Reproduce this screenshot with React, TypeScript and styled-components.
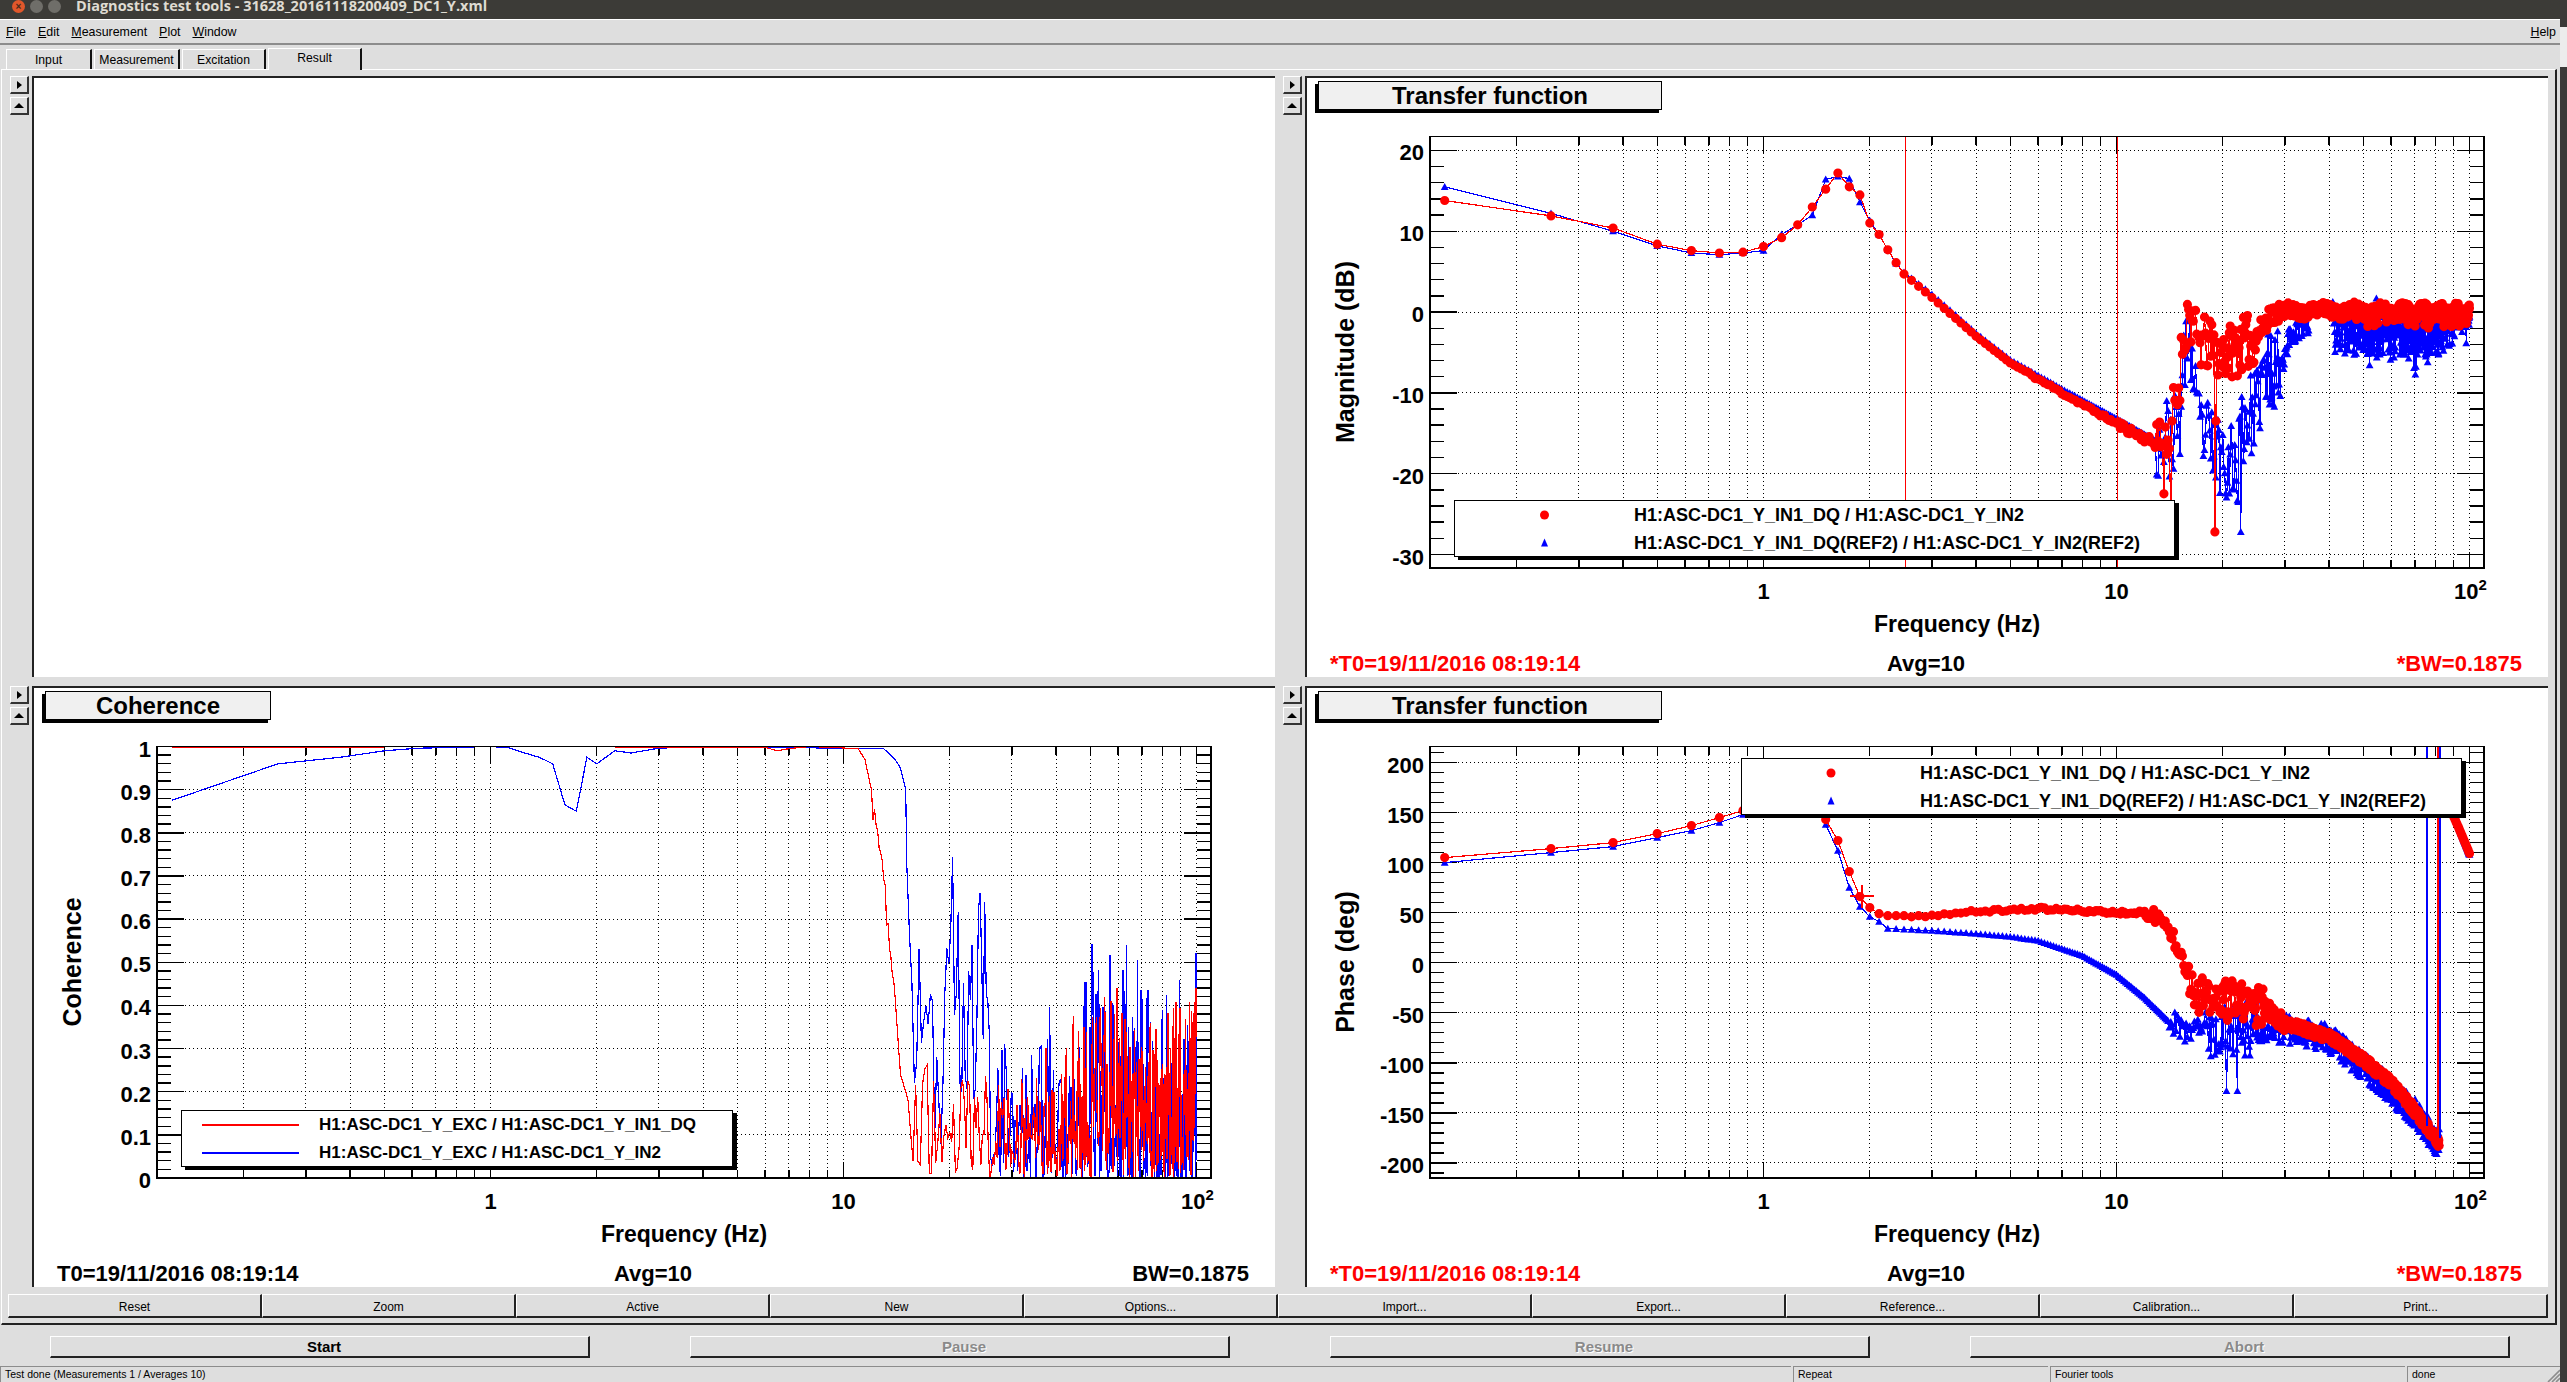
import React, { useMemo } from "react";
import styled, { createGlobalStyle } from "styled-components";

const GlobalStyle = createGlobalStyle`
  html, body { margin: 0; padding: 0; background: #3a3a38; }
  body { width: 2567px; height: 1382px; overflow: hidden; font-family: "Liberation Sans", Arial, sans-serif; }
`;

/* ---------- data ---------- */

type Table = [number, number][];
type Point = [number, number];

const rng = (seed: number) => () => {
  seed = (seed + 0x6d2b79f5) | 0;
  let t = Math.imul(seed ^ (seed >>> 15), 1 | seed);
  t = (t + Math.imul(t ^ (t >>> 7), 61 | t)) ^ t;
  return ((t ^ (t >>> 14)) >>> 0) / 4294967296;
};

const interp = (table: Table, f: number) => {
  if (f <= table[0][0]) return table[0][1];
  for (let i = 1; i < table.length; i++) {
    if (f <= table[i][0]) {
      const [f0, v0] = table[i - 1];
      const [f1, v1] = table[i];
      const t = (Math.log10(f) - Math.log10(f0)) / (Math.log10(f1) - Math.log10(f0));
      return v0 + (v1 - v0) * t;
    }
  }
  return table[table.length - 1][1];
};

const magRedLow: Table = [
  [0.125, 13.8], [0.25, 11.9], [0.375, 10.4], [0.5, 8.4], [0.625, 7.6], [0.75, 7.3], [0.875, 7.4], [1, 8.1],
  [1.125, 9.2], [1.25, 10.8], [1.375, 13], [1.5, 15.2], [1.625, 17.2], [1.75, 15.5], [1.875, 14.5], [2, 11],
  [2.125, 9.6], [2.25, 7.7], [2.375, 6.1], [2.5, 4.7], [3, 1.8], [4, -3], [5, -6.3], [7, -10], [10, -13.8], [13, -16.4],
];
const magBlueLow: Table = [
  [0.125, 15.5], [0.25, 12.2], [0.375, 10], [0.5, 8.2], [0.625, 7.3], [0.75, 7.1], [0.875, 7.3], [1, 7.6],
  [1.125, 9.6], [1.25, 10.8], [1.375, 12], [1.5, 16.4], [1.625, 16.8], [1.75, 16.5], [1.875, 13.6], [2, 11.3],
  [2.125, 9.6], [2.25, 7.7], [2.375, 6], [2.5, 4.9], [3, 2.2], [4, -2.6], [5, -5.9], [7, -9.5], [10, -13.2], [13, -16],
];
const magRedHigh: Table = [
  [13, -15.5], [14, -15], [15, -9.5], [15.4, -3.5], [16, 0], [16.9, -3.5], [18.7, -4.5], [19.6, -5], [22, -4.5],
  [25, -3], [27, -0.5], [30, 0.2], [100, 0],
];
const magBlueHigh: Table = [
  [13, -16], [15, -15], [15.4, -9], [16, -1.5], [16.4, -7], [17, -14], [19, -17], [22, -19], [22.5, -14],
  [25, -12], [26, -8], [29.5, -6], [31, -3], [35, -1], [38, 0.3], [41, 0], [43, -2], [100, -2],
];

const phaseRedTable: Table = [
  [0.125, 105], [0.25, 114], [0.375, 120], [0.5, 129], [0.625, 137], [0.75, 145], [0.875, 152], [1, 160],
  [1.25, 165], [1.375, 160], [1.5, 143], [1.625, 122], [1.75, 91], [1.875, 66], [2, 55], [2.125, 49], [2.25, 47],
  [3, 47], [4, 51], [6, 54], [10, 50], [12.5, 50], [13.5, 42], [14.5, 25], [15.5, 5], [16.5, -25], [18, -38],
  [22, -38], [26, -45], [30, -60], [40, -74], [50, -97], [60, -120], [70, -148], [80, -175], [82, -180],
];
const phaseBlueTable: Table = [
  [0.125, 100], [0.25, 110], [0.375, 116], [0.5, 125], [0.625, 132], [0.75, 140], [0.875, 148], [1, 155],
  [1.25, 165], [1.375, 162], [1.5, 138], [1.625, 112], [1.75, 75], [1.875, 56], [2, 46], [2.125, 41], [2.25, 34],
  [3, 32], [4, 29], [5, 26], [6, 22], [8, 7], [10, -12], [12, -35], [14, -58], [15, -65], [18, -68], [25, -65],
  [30, -64], [40, -76], [50, -103], [60, -128], [70, -150], [80, -178], [83, -180],
];

const cohBlueEnv: Table = [
  [15, 0.9], [16, 0.66], [17, 0.38], [18, 0.62], [20, 0.85], [22, 0.55], [25, 0.78], [28, 0.38], [30, 0.34], [40, 0.42],
  [50, 0.56], [60, 0.6], [70, 0.56], [80, 0.46], [100, 0.56],
];
const cohRedEnv: Table = [[15, 0.27], [30, 0.26], [40, 0.34], [50, 0.42], [60, 0.46], [75, 0.38], [100, 0.44]];
const cohBlueTop: Table = [
  [0.125, 0.875], [0.25, 0.96], [0.375, 0.975], [0.5, 0.99], [0.625, 0.996], [1, 1], [1.125, 0.997], [1.25, 0.985],
  [1.375, 0.975], [1.5, 0.96], [1.625, 0.865], [1.75, 0.85], [1.875, 0.975], [2, 0.96], [2.25, 0.99], [2.5, 0.985],
  [3, 0.996], [4, 1], [13, 0.995], [14, 0.97], [14.5, 0.95], [15, 0.9],
];
const cohRedTop: Table = [
  [0.125, 0.997], [1, 1], [6, 0.998], [6.5, 0.99], [7, 0.995], [8, 1], [11, 0.995], [11.5, 0.97], [12, 0.9],
  [12.5, 0.85], [13, 0.72], [13.5, 0.6], [14, 0.42], [14.5, 0.24], [15, 0.2],
];

const FREQS = Array.from({ length: 800 }, (_, i) => (i + 1) * 0.125);

const magRed = (): Point[] => {
  const r = rng(11);
  return FREQS.map((f): Point => {
    if (f < 13) return [f, interp(magRedLow, f) + (f > 5 ? (r() - 0.5) * (f > 10 ? 1 : 0.4) : 0)];
    if (Math.abs(f - 19) < 0.07) return [f, -27.2];
    if (Math.abs(f - 19.125) < 0.07) return [f, -13.5];
    if (Math.abs(f - 14.25) < 0.07) return [f, -25];
    const amp = f < 25 ? 3.4 : f < 30 ? 1.3 : 0.8;
    const dip = f >= 13.5 && f < 14.5 && r() > 0.65 ? -5 : 0;
    const wobble = f > 30 ? Math.sin(f * 0.7) * 0.35 : 0;
    const low = f > 40 && r() > 0.92 ? -1.2 : 0;
    return [f, interp(magRedHigh, f) + (r() - 0.5) * 2 * amp + dip + wobble + low];
  });
};

const magBlue = (): Point[] => {
  const r = rng(23);
  return FREQS.map((f): Point => {
    if (f < 13) return [f, interp(magBlueLow, f)];
    if (Math.abs(f - 22.5) < 0.07) return [f, -27.2];
    if (Math.abs(f - 22.125) < 0.07) return [f, -23.5];
    if (f > 35 && f < 41) return [f, 0.3 + (r() - 0.5) * 0.3];
    if (Math.abs(f - 54.5) < 0.07) return [f, 1.7];
    if (f > 41) {
      const spike = r() > 0.9 ? -3 * r() : 0;
      const env = f > 85 ? 1.6 : 5;
      return [f, -0.3 - Math.pow(r(), 1.3) * env + spike];
    }
    const amp = f < 29.5 ? 5 : 1.6;
    return [f, interp(magBlueHigh, f) + (r() - 0.5) * 2 * amp];
  });
};

const phaseRed = (): Point[] => {
  const r = rng(37);
  return FREQS.map((f): Point => {
    if (f > 82) return [f, 180 - ((f - 82) / 18) * 68 - (f < 84 ? 0 : 3)];
    const base = interp(phaseRedTable, f);
    let amp = 0;
    if (f > 2.5) amp = 1.5;
    if (f > 12) amp = 8;
    if (f > 15.5) amp = 20;
    if (f > 26) amp = 9;
    if (f > 30) amp = 5;
    return [f, base + (r() - 0.5) * 2 * amp];
  });
};

const phaseBlue = (): Point[] => {
  const r = rng(51);
  return FREQS.map((f): Point => {
    if (f > 82.4) return [f, 180 - ((f - 82.4) / 17.6) * 72];
    if (f > 82) return [f, -180];
    const base = interp(phaseBlueTable, f);
    let amp = 0;
    if (f > 14) amp = 13;
    if (f > 17) amp = 28;
    if (f > 25) amp = 16;
    if (f > 32) amp = 14;
    if (Math.abs(f - 20.5) < 0.07 || Math.abs(f - 22) < 0.07) return [f, -128];
    return [f, base + (r() - 0.5) * 2 * amp];
  });
};

const cohBlue = (): Point[] => {
  const r = rng(71);
  return FREQS.map((f): Point => {
    if (f <= 15) return [f, interp(cohBlueTop, f)];
    if (f >= 99.75) return [f, 0.52];
    if (Math.abs(f - 68) < 0.07) return [f, 0.64];
    if (Math.abs(f - 20) < 0.07) return [f, 0.85];
    if (Math.abs(f - 25) < 0.07) return [f, 0.75];
    const env = interp(cohBlueEnv, f);
    const k = f < 26 ? 0.7 : 2.4;
    return [f, Math.pow(r(), k) * env];
  }).filter(([f], i) => f <= 15 || i % 2 === 0 || f >= 99.75);
};

const cohRed = (): Point[] => {
  const r = rng(83);
  return FREQS.map((f): Point => {
    if (f <= 15) return [f, interp(cohRedTop, f) - (f > 12 && f < 14 ? r() * 0.08 : 0)];
    if (f >= 99.75) return [f, 0.44];
    const env = interp(cohRedEnv, f);
    return [f, Math.pow(r(), f < 30 ? 1.2 : 1.7) * env];
  }).filter(([f], i) => f <= 15 || i % 2 === 1 || f >= 99.75);
};

/* ---------- plot ---------- */

const LEFT = 125;
const RIGHT = 1179;
const TOP = 60.5;
const BOTTOM = 492;
const X1 = 458.5;
const DECADE = 353;

const xOf = (f: number) => X1 + Math.log10(f) * DECADE;

type Axis = {
  y0: number; // pixel of value v0
  v0: number;
  perUnit: number;
  major: number[];
  minorStep: number;
};

const dots = (pts: [number, number][], r: number) =>
  pts.map(([x, y]) => `M${(x - r).toFixed(1)} ${y.toFixed(1)}a${r} ${r} 0 1 0 ${2 * r} 0a${r} ${r} 0 1 0 ${-2 * r} 0`).join("");

const triangles = (pts: [number, number][], s: number) =>
  pts.map(([x, y]) => `M${x.toFixed(1)} ${(y - s).toFixed(1)}l${s} ${(s * 1.8).toFixed(1)}h${-2 * s}z`).join("");

const AxisLabel = styled.text`
  font: bold 22px "Liberation Sans", Arial, sans-serif;
  fill: #000;
`;

const AxisTitle = styled.text`
  font: bold 23px "Liberation Sans", Arial, sans-serif;
  fill: #000;
`;

const YTitle = styled(AxisTitle)`
  font-size: 25px;
`;

const Expo = styled.tspan`
  font-size: 15px;
`;

const PlotSvg = styled.svg`
  display: block;
  width: 1243px;
  height: 540px;
  flex: none;
`;

type Series = { points: Point[]; color: string; marker?: "dot" | "tri" };

const Plot = ({ axis, ytitle, series, extra }: { axis: Axis; ytitle: string; series: Series[]; extra?: React.ReactNode }) => {
  const yOf = (v: number) => axis.y0 + (axis.v0 - v) * axis.perUnit;
  const subs: { x: number; major: boolean }[] = [];
  for (let d = -1; d <= 2; d++) {
    for (let k = 1; k <= 9; k++) {
      const x = xOf(k * Math.pow(10, d));
      if (x > LEFT + 1 && x < RIGHT - 1) subs.push({ x, major: k === 1 });
    }
  }
  const minors: number[] = [];
  const vTop = axis.v0 + (axis.y0 - TOP) / axis.perUnit;
  const vBot = axis.v0 - (BOTTOM - axis.y0) / axis.perUnit;
  const start = Math.ceil(vBot / axis.minorStep - 1e-6);
  for (let i = start; i * axis.minorStep <= vTop + 1e-6; i++) minors.push(i * axis.minorStep);
  const clipId = `frame-${ytitle.replace(/\W/g, "")}`;

  return (
    <PlotSvg viewBox="0 34 1243 540">
      <defs>
        <clipPath id={clipId}>
          <rect x={LEFT} y={TOP} width={RIGHT - LEFT} height={BOTTOM - TOP} />
        </clipPath>
      </defs>
      <g stroke="#000" strokeWidth="1" strokeDasharray="1.4 2.6" shapeRendering="crispEdges">
        {subs.map((s) => (
          <line key={s.x} x1={s.x} x2={s.x} y1={TOP} y2={BOTTOM} />
        ))}
        {axis.major.map((v) => (
          <line key={v} x1={LEFT} x2={RIGHT} y1={yOf(v)} y2={yOf(v)} />
        ))}
      </g>
      <g stroke="#000" strokeWidth="1.4" shapeRendering="crispEdges">
        {minors.map((v) => {
          const isMajor = axis.major.some((m) => Math.abs(m - v) < 1e-6);
          const len = isMajor ? 27 : 14;
          return (
            <g key={v}>
              <line x1={LEFT} x2={LEFT + len} y1={yOf(v)} y2={yOf(v)} />
              <line x1={RIGHT - len} x2={RIGHT} y1={yOf(v)} y2={yOf(v)} />
            </g>
          );
        })}
        {subs.map((s) => {
          const len = s.major ? 16 : 8;
          return (
            <g key={s.x}>
              <line x1={s.x} x2={s.x} y1={BOTTOM - len} y2={BOTTOM} />
              <line x1={s.x} x2={s.x} y1={TOP} y2={TOP + len} />
            </g>
          );
        })}
      </g>
      <g clipPath={`url(#${clipId})`}>
        {series.map((s, i) => {
          const pts = s.points.map(([f, v]): [number, number] => [xOf(f), yOf(v)]);
          return (
            <g key={i}>
              <polyline
                points={pts.map(([x, y]) => `${x.toFixed(1)},${y.toFixed(1)}`).join(" ")}
                fill="none"
                stroke={s.color}
                strokeWidth="1.2"
                shapeRendering="crispEdges"
              />
              {s.marker === "dot" && <path d={dots(pts, 4.6)} fill={s.color} />}
              {s.marker === "tri" && <path d={triangles(pts, 3.9)} fill={s.color} />}
            </g>
          );
        })}
        {extra}
      </g>
      <rect x={LEFT} y={TOP} width={RIGHT - LEFT} height={BOTTOM - TOP} fill="none" stroke="#000" strokeWidth="1.6" shapeRendering="crispEdges" />
      {axis.major.map((v) => (
        <AxisLabel key={v} x={LEFT - 6} y={yOf(v) + 10} textAnchor="end">
          {v}
        </AxisLabel>
      ))}
      <AxisLabel x={xOf(1)} y={523} textAnchor="middle">1</AxisLabel>
      <AxisLabel x={xOf(10)} y={523} textAnchor="middle">10</AxisLabel>
      <AxisLabel x={xOf(100) + 1} y={523} textAnchor="middle">
        10<Expo dy={-9}>2</Expo>
      </AxisLabel>
      <AxisTitle x={652} y={556} textAnchor="middle">Frequency (Hz)</AxisTitle>
      <YTitle transform="translate(49 276) rotate(-90)" textAnchor="middle">{ytitle}</YTitle>
    </PlotSvg>
  );
};

/* ---------- window chrome ---------- */

const Desktop = styled.div`
  display: flex;
  width: 2567px;
  height: 1382px;
  background: #3a3a38;
  overflow: hidden;
`;

const Edge = styled.div`
  flex: 1;
  padding-top: 27px;
`;

const EdgeBlock = styled.div`
  height: 40px;
  background: #ececec;
`;

const Win = styled.div`
  display: flex;
  flex-direction: column;
  width: 2560px;
  height: 1382px;
  background: #dedede;
`;

const TitleBar = styled.div`
  display: flex;
  align-items: flex-start;
  flex: none;
  height: 19px;
  padding-left: 12px;
  background: #3c3b37;
`;

const WinButton = styled.span<{ $close?: boolean }>`
  display: flex;
  align-items: center;
  justify-content: center;
  width: 13px;
  height: 13px;
  margin-right: 5px;
  border-radius: 50%;
  background: ${(p) => (p.$close ? "#e0572b" : "#6f6e69")};
  color: #4a2a1a;
  font: bold 10px "Liberation Sans", Arial, sans-serif;
  line-height: 13px;
`;

const TitleText = styled.span`
  margin: 0 0 0 10px;
  color: #dfdbd2;
  font: bold 14.5px "Open Sans", "Liberation Sans", sans-serif;
  line-height: 11px;
  white-space: nowrap;
`;

const MenuBar = styled.div`
  display: flex;
  align-items: center;
  flex: none;
  height: 23px;
  padding: 0 4px 0 6px;
  border-top: 1px solid #fff;
  border-bottom: 2px solid #8c8c8c;
  font-size: 12.4px;
  color: #000;
`;

const MenuItem = styled.span<{ $right?: boolean }>`
  margin-right: 12px;
  ${(p) => p.$right && "margin-left: auto; margin-right: 0;"}
  u { text-underline-offset: 1px; }
`;

const TabRow = styled.div`
  display: flex;
  align-items: flex-end;
  flex: none;
  height: 24px;
  padding-left: 6px;
  font-size: 12.2px;
`;

const Tab = styled.div<{ $active?: boolean; $w: number }>`
  display: flex;
  align-items: center;
  justify-content: center;
  box-sizing: border-box;
  width: ${(p) => p.$w}px;
  height: ${(p) => (p.$active ? 22 : 20)}px;
  margin-right: ${(p) => (p.$active ? 0 : 2)}px;
  margin-bottom: ${(p) => (p.$active ? -1 : 0)}px;
  padding-bottom: ${(p) => (p.$active ? 3 : 0)}px;
  border-top: 1px solid #fff;
  border-left: 1px solid #fff;
  border-right: 2px solid #111;
  background: #dedede;
  position: relative;
  z-index: ${(p) => (p.$active ? 1 : 0)};
`;

const TabFrame = styled.div`
  display: flex;
  flex-direction: column;
  flex: none;
  box-sizing: border-box;
  height: 1256px;
  margin: 0 3px 0 1px;
  padding: 6px 7px 0 0;
  border-top: 1px solid #fff;
  border-left: 1px solid #fff;
  border-right: 2px solid #222;
  border-bottom: 2px solid #222;
`;

const PaneGrid = styled.div`
  display: grid;
  grid-template-columns: 1273px 1273px;
  grid-template-rows: 601px 601px;
  row-gap: 9px;
`;

const Pane = styled.div`
  display: flex;
`;

const Strip = styled.div`
  display: flex;
  flex-direction: column;
  flex: none;
  align-items: flex-end;
  gap: 3px;
  width: 30px;
  padding-right: 3px;
  box-sizing: border-box;
`;

const StripButton = styled.div`
  display: flex;
  align-items: center;
  justify-content: center;
  box-sizing: border-box;
  width: 19px;
  height: 18px;
  border-top: 1px solid #fff;
  border-left: 1px solid #fff;
  border-right: 2px solid #333;
  border-bottom: 2px solid #333;
  background: #dedede;
`;

const ArrowRight = styled.i`
  width: 0;
  height: 0;
  border-top: 4px solid transparent;
  border-bottom: 4px solid transparent;
  border-left: 5px solid #000;
`;

const ArrowUp = styled.i`
  width: 0;
  height: 0;
  border-left: 5px solid transparent;
  border-right: 5px solid transparent;
  border-bottom: 5px solid #000;
`;

const Canvas = styled.div`
  position: relative;
  display: flex;
  flex-direction: column;
  box-sizing: border-box;
  width: 1243px;
  height: 601px;
  background: #fff;
  box-shadow: inset 2px 2px 0 #222;
`;

const TitleBox = styled.div<{ $w: number }>`
  display: flex;
  align-items: center;
  justify-content: center;
  flex: none;
  box-sizing: border-box;
  width: ${(p) => p.$w}px;
  height: 29px;
  margin: 5px 0 0 13px;
  border: 1.5px solid #000;
  background: #f0f0f0;
  box-shadow: -3px 3px 0 #000;
  color: #000;
  font: bold 24px "Liberation Sans", Arial, sans-serif;
`;

const Footer = styled.div<{ $red?: boolean }>`
  display: grid;
  grid-template-columns: 1fr auto 1fr;
  flex: none;
  height: 26px;
  padding: 1px 26px 0 25px;
  font: bold 22px "Liberation Sans", Arial, sans-serif;
  line-height: 26px;
  color: ${(p) => (p.$red ? "#f00" : "#000")};
`;

const FooterAvg = styled.span`
  color: #000;
`;

const FooterEnd = styled.span`
  text-align: right;
`;

const Legend = styled.div<{ $x: number; $y: number; $w: number; $key: number; $text: number; $size: number }>`
  position: absolute;
  left: ${(p) => p.$x}px;
  top: ${(p) => p.$y}px;
  display: grid;
  grid-template-columns: ${(p) => p.$key}px ${(p) => p.$text}px;
  grid-auto-rows: 28px;
  align-items: center;
  box-sizing: border-box;
  width: ${(p) => p.$w}px;
  height: 57px;
  background: #fff;
  border: 1.5px solid #000;
  box-shadow: 4px 3px 0 #000;
  font: bold ${(p) => p.$size}px "Liberation Sans", Arial, sans-serif;
  color: #000;
  white-space: nowrap;
`;

const LegendKey = styled.svg`
  display: block;
  width: 100%;
  height: 12px;
`;

const LegendLabel = styled.span`
  display: block;
`;

const ToolRow = styled.div`
  display: grid;
  grid-template-columns: repeat(10, 1fr);
  height: 24px;
  margin: 7px 0 0 6px;
`;

const ToolButton = styled.div`
  display: flex;
  align-items: center;
  justify-content: center;
  box-sizing: border-box;
  padding-top: 2px;
  border-top: 1px solid #fff;
  border-left: 1px solid #fff;
  border-right: 2px solid #222;
  border-bottom: 2px solid #222;
  font-size: 12px;
  color: #000;
`;

const ActionRow = styled.div`
  display: flex;
  gap: 100px;
  flex: none;
  box-sizing: border-box;
  height: 41px;
  padding: 11px 0 0 50px;
`;

const ActionButton = styled.div<{ $disabled?: boolean }>`
  display: flex;
  align-items: center;
  justify-content: center;
  box-sizing: border-box;
  width: 540px;
  height: 22px;
  padding-left: 9px;
  border-top: 1px solid #fff;
  border-left: 1px solid #fff;
  border-right: 2px solid #222;
  border-bottom: 2px solid #222;
  font: bold 15px "Liberation Sans", Arial, sans-serif;
  color: ${(p) => (p.$disabled ? "#8a8a8a" : "#000")};
  text-shadow: ${(p) => (p.$disabled ? "1px 1px 0 #fff" : "none")};
`;

const StatusBar = styled.div`
  position: relative;
  display: flex;
  flex: 1;
  gap: 2px;
  font-size: 10.5px;
  color: #000;
`;

const StatusCell = styled.div<{ $w?: number }>`
  display: flex;
  align-items: center;
  box-sizing: border-box;
  ${(p) => (p.$w ? `width: ${p.$w}px;` : "flex: 1;")}
  padding: 0 0 2px 4px;
  border-top: 1px solid #8c8c8c;
  border-left: 1px solid #8c8c8c;
  white-space: nowrap;
`;

const Grip = styled.svg`
  position: absolute;
  right: 0;
  bottom: 0;
  width: 13px;
  height: 13px;
`;

type LegendRow = { label: string; color: string; kind: "dot" | "tri" | "line" };

const LegendPane = ({
  x, y, w, keyW, textW, size, rows,
}: {
  x: number; y: number; w: number; keyW: number; textW: number; size: number; rows: LegendRow[];
}) => (
  <Legend $x={x} $y={y} $w={w} $key={keyW} $text={textW} $size={size}>
    {rows.map((row) => (
      <React.Fragment key={row.label}>
        <LegendKey viewBox={`0 0 ${keyW} 12`}>
          {row.kind === "dot" && <circle cx={keyW / 2} cy="6" r="4.5" fill={row.color} />}
          {row.kind === "tri" && <path d={`M${keyW / 2} 1.5l3.5 8h-7z`} fill={row.color} />}
          {row.kind === "line" && <line x1={20} x2={keyW - 20} y1="6" y2="6" stroke={row.color} strokeWidth="1.3" shapeRendering="crispEdges" />}
        </LegendKey>
        <LegendLabel>{row.label}</LegendLabel>
      </React.Fragment>
    ))}
  </Legend>
);

const TF_LEGEND: LegendRow[] = [
  { label: "H1:ASC-DC1_Y_IN1_DQ / H1:ASC-DC1_Y_IN2", color: "#f00", kind: "dot" },
  { label: "H1:ASC-DC1_Y_IN1_DQ(REF2) / H1:ASC-DC1_Y_IN2(REF2)", color: "#00f", kind: "tri" },
];

const COH_LEGEND: LegendRow[] = [
  { label: "H1:ASC-DC1_Y_EXC / H1:ASC-DC1_Y_IN1_DQ", color: "#f00", kind: "line" },
  { label: "H1:ASC-DC1_Y_EXC / H1:ASC-DC1_Y_IN2", color: "#00f", kind: "line" },
];

const TOOLS = ["Reset", "Zoom", "Active", "New", "Options...", "Import...", "Export...", "Reference...", "Calibration...", "Print..."];

const PaneFrame = ({ children }: { children: React.ReactNode }) => (
  <Pane>
    <Strip>
      <StripButton><ArrowRight /></StripButton>
      <StripButton><ArrowUp /></StripButton>
    </Strip>
    <Canvas>{children}</Canvas>
  </Pane>
);

const ChartFooter = ({ red }: { red?: boolean }) => (
  <Footer $red={red}>
    <span>{red ? "*" : ""}T0=19/11/2016 08:19:14</span>
    <FooterAvg>Avg=10</FooterAvg>
    <FooterEnd>{red ? "*" : ""}BW=0.1875</FooterEnd>
  </Footer>
);

const range = (from: number, to: number, step: number) => {
  const out: number[] = [];
  for (let v = from; v <= to + 1e-6; v += step) out.push(Math.round(v * 100) / 100);
  return out;
};

const App = () => {
  const charts = useMemo(
    () => ({
      magR: magRed(),
      magB: magBlue(),
      phR: phaseRed(),
      phB: phaseBlue(),
      cohR: cohRed(),
      cohB: cohBlue(),
    }),
    []
  );

  const magAxis: Axis = { y0: 74.4, v0: 20, perUnit: 8.082, major: range(-30, 20, 10), minorStep: 2 };
  const cohAxis: Axis = { y0: 60.5, v0: 1, perUnit: 431.5, major: range(0, 1, 0.1), minorStep: 0.02 };
  const phaseAxis: Axis = { y0: 76.5, v0: 200, perUnit: 1.001, major: range(-200, 200, 50), minorStep: 10 };

  return (
    <Desktop>
      <GlobalStyle />
      <Win>
        <TitleBar>
          <WinButton $close>×</WinButton>
          <WinButton />
          <WinButton />
          <TitleText>Diagnostics test tools - 31628_20161118200409_DC1_Y.xml</TitleText>
        </TitleBar>
        <MenuBar>
          <MenuItem><u>F</u>ile</MenuItem>
          <MenuItem><u>E</u>dit</MenuItem>
          <MenuItem><u>M</u>easurement</MenuItem>
          <MenuItem><u>P</u>lot</MenuItem>
          <MenuItem><u>W</u>indow</MenuItem>
          <MenuItem $right><u>H</u>elp</MenuItem>
        </MenuBar>
        <TabRow>
          <Tab $w={86}>Input</Tab>
          <Tab $w={86}>Measurement</Tab>
          <Tab $w={84}>Excitation</Tab>
          <Tab $w={94} $active>Result</Tab>
        </TabRow>
        <TabFrame>
          <PaneGrid>
            <PaneFrame>{null}</PaneFrame>
            <PaneFrame>
              <TitleBox $w={344}>Transfer function</TitleBox>
              <Plot
                axis={magAxis}
                ytitle="Magnitude (dB)"
                series={[
                  { points: charts.magB, color: "#00f", marker: "tri" },
                  { points: charts.magR, color: "#f00", marker: "dot" },
                ]}
                extra={
                  <g stroke="#f00" strokeWidth="1" shapeRendering="crispEdges">
                    <line x1={600} x2={600} y1={TOP} y2={BOTTOM} />
                    <line x1={812} x2={812} y1={TOP} y2={BOTTOM} />
                  </g>
                }
              />
              <ChartFooter red />
              <LegendPane x={149} y={424} w={721} keyW={179} textW={530} size={18} rows={TF_LEGEND} />
            </PaneFrame>
            <PaneFrame>
              <TitleBox $w={226}>Coherence</TitleBox>
              <Plot
                axis={cohAxis}
                ytitle="Coherence"
                series={[
                  { points: charts.cohB, color: "#00f" },
                  { points: charts.cohR, color: "#f00" },
                ]}
              />
              <ChartFooter />
              <LegendPane x={149} y={424} w={552} keyW={137} textW={410} size={17} rows={COH_LEGEND} />
            </PaneFrame>
            <PaneFrame>
              <TitleBox $w={344}>Transfer function</TitleBox>
              <Plot
                axis={phaseAxis}
                ytitle="Phase (deg)"
                series={[
                  { points: charts.phB, color: "#00f", marker: "tri" },
                  { points: charts.phR, color: "#f00", marker: "dot" },
                ]}
                extra={
                  <g shapeRendering="crispEdges">
                    <g stroke="#f00" strokeWidth="1.2">
                      <line x1={xOf(1.9) - 12} x2={xOf(1.9) + 12} y1={210} y2={210} />
                      <line x1={xOf(1.9)} x2={xOf(1.9)} y1={199} y2={222} />
                    </g>
                    <line x1={1122} x2={1122} y1={TOP} y2={440} stroke="#00f" strokeWidth="1.2" />
                    <line x1={1133} x2={1133} y1={TOP} y2={452} stroke="#f00" strokeWidth="1.6" />
                    <line x1={1135} x2={1135} y1={TOP} y2={452} stroke="#00f" strokeWidth="2.4" />
                  </g>
                }
              />
              <ChartFooter red />
              <LegendPane x={436} y={72} w={721} keyW={178} textW={530} size={18} rows={TF_LEGEND} />
            </PaneFrame>
          </PaneGrid>
          <ToolRow>
            {TOOLS.map((label) => (
              <ToolButton key={label}>{label}</ToolButton>
            ))}
          </ToolRow>
        </TabFrame>
        <ActionRow>
          <ActionButton>Start</ActionButton>
          <ActionButton $disabled>Pause</ActionButton>
          <ActionButton $disabled>Resume</ActionButton>
          <ActionButton $disabled>Abort</ActionButton>
        </ActionRow>
        <StatusBar>
          <StatusCell $w={1791}>Test done (Measurements 1 / Averages 10)</StatusCell>
          <StatusCell $w={255}>Repeat</StatusCell>
          <StatusCell $w={355}>Fourier tools</StatusCell>
          <StatusCell>done</StatusCell>
          <Grip viewBox="0 0 13 13">
            <path d="M13 1L1 13M13 5L5 13M13 9L9 13" stroke="#8c8c8c" strokeWidth="1.6" />
          </Grip>
        </StatusBar>
      </Win>
      <Edge>
        <EdgeBlock />
      </Edge>
    </Desktop>
  );
};

export default App;
